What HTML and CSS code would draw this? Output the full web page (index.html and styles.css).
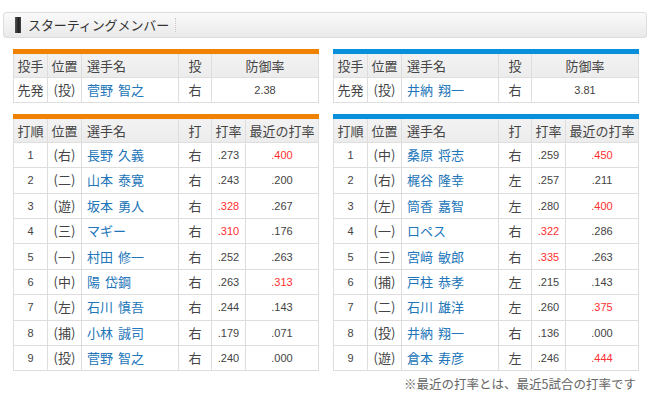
FILE: index.html
```html
<!DOCTYPE html>
<html lang="ja">
<head>
<meta charset="utf-8">
<link rel="stylesheet" href="styles.css">
</head>
<body>
<div class="page">
  <div class="title-bar">
    <span class="title-mark"></span>
    <span class="title-text">スターティングメンバー</span>
    <span class="title-sep"></span>
  </div>

  <div class="columns">
    <div class="team team-home">
      <table class="tbl pitcher">
        <colgroup><col class="c1"><col class="c2"><col class="c3"><col class="c4"><col class="c5w"></colgroup>
        <tr class="head"><th>投手</th><th>位置</th><th class="l">選手名</th><th>投</th><th>防御率</th></tr>
        <tr><td>先発</td><td>(投)</td><td class="l name">菅野 智之</td><td>右</td><td class="num">2.38</td></tr>
      </table>

      <table class="tbl batting">
        <colgroup><col class="c1"><col class="c2"><col class="c3"><col class="c4"><col class="c5"><col class="c6"></colgroup>
        <tr class="head"><th>打順</th><th>位置</th><th class="l">選手名</th><th>打</th><th>打率</th><th>最近の打率</th></tr>
        <tr><td class="num">1</td><td>(右)</td><td class="l name">長野 久義</td><td>右</td><td class="num">.273</td><td class="num red">.400</td></tr>
        <tr><td class="num">2</td><td>(二)</td><td class="l name">山本 泰寛</td><td>右</td><td class="num">.243</td><td class="num">.200</td></tr>
        <tr><td class="num">3</td><td>(遊)</td><td class="l name">坂本 勇人</td><td>右</td><td class="num red">.328</td><td class="num">.267</td></tr>
        <tr><td class="num">4</td><td>(三)</td><td class="l name">マギー</td><td>右</td><td class="num red">.310</td><td class="num">.176</td></tr>
        <tr><td class="num">5</td><td>(一)</td><td class="l name">村田 修一</td><td>右</td><td class="num">.252</td><td class="num">.263</td></tr>
        <tr><td class="num">6</td><td>(中)</td><td class="l name">陽 岱鋼</td><td>右</td><td class="num">.263</td><td class="num red">.313</td></tr>
        <tr><td class="num">7</td><td>(左)</td><td class="l name">石川 慎吾</td><td>右</td><td class="num">.244</td><td class="num">.143</td></tr>
        <tr><td class="num">8</td><td>(捕)</td><td class="l name">小林 誠司</td><td>右</td><td class="num">.179</td><td class="num">.071</td></tr>
        <tr><td class="num">9</td><td>(投)</td><td class="l name">菅野 智之</td><td>右</td><td class="num">.240</td><td class="num">.000</td></tr>
      </table>
    </div>

    <div class="team team-away">
      <table class="tbl pitcher">
        <colgroup><col class="c1"><col class="c2"><col class="c3"><col class="c4"><col class="c5w"></colgroup>
        <tr class="head"><th>投手</th><th>位置</th><th class="l">選手名</th><th>投</th><th>防御率</th></tr>
        <tr><td>先発</td><td>(投)</td><td class="l name">井納 翔一</td><td>右</td><td class="num">3.81</td></tr>
      </table>

      <table class="tbl batting">
        <colgroup><col class="c1"><col class="c2"><col class="c3"><col class="c4"><col class="c5"><col class="c6"></colgroup>
        <tr class="head"><th>打順</th><th>位置</th><th class="l">選手名</th><th>打</th><th>打率</th><th>最近の打率</th></tr>
        <tr><td class="num">1</td><td>(中)</td><td class="l name">桑原 将志</td><td>右</td><td class="num">.259</td><td class="num red">.450</td></tr>
        <tr><td class="num">2</td><td>(右)</td><td class="l name">梶谷 隆幸</td><td>左</td><td class="num">.257</td><td class="num">.211</td></tr>
        <tr><td class="num">3</td><td>(左)</td><td class="l name">筒香 嘉智</td><td>左</td><td class="num">.280</td><td class="num red">.400</td></tr>
        <tr><td class="num">4</td><td>(一)</td><td class="l name">ロペス</td><td>右</td><td class="num red">.322</td><td class="num">.286</td></tr>
        <tr><td class="num">5</td><td>(三)</td><td class="l name">宮﨑 敏郎</td><td>右</td><td class="num red">.335</td><td class="num">.263</td></tr>
        <tr><td class="num">6</td><td>(捕)</td><td class="l name">戸柱 恭孝</td><td>左</td><td class="num">.215</td><td class="num">.143</td></tr>
        <tr><td class="num">7</td><td>(二)</td><td class="l name">石川 雄洋</td><td>左</td><td class="num">.260</td><td class="num red">.375</td></tr>
        <tr><td class="num">8</td><td>(投)</td><td class="l name">井納 翔一</td><td>右</td><td class="num">.136</td><td class="num">.000</td></tr>
        <tr><td class="num">9</td><td>(遊)</td><td class="l name">倉本 寿彦</td><td>左</td><td class="num">.246</td><td class="num red">.444</td></tr>
      </table>
      <p class="note">※最近の打率とは、最近5試合の打率です</p>
    </div>
  </div>
</div>
</body>
</html>
```

FILE: styles.css
```css
html, body {
  margin: 0;
  padding: 0;
  background: #ffffff;
}

body {
  font-family: "Noto Sans CJK JP", "Liberation Sans", sans-serif;
  color: #444444;
}

.page {
  width: 650px;
  padding-top: 12px;
}

.title-bar {
  margin: 0 3px;
  height: 24px;
  border: 1px solid #dddddd;
  border-radius: 3px;
  background: linear-gradient(#f9f9f9, #f3f3f3 45%, #e9e9e9);
  display: flex;
  align-items: center;
  padding-left: 11px;
}

.title-mark {
  width: 6px;
  height: 16px;
  background: linear-gradient(90deg, #555555, #222222 60%, #444444);
  margin-right: 7px;
}

.title-text {
  font-size: 13px;
  line-height: 16px;
  color: #333333;
  letter-spacing: -0.1px;
}

.title-sep {
  width: 0;
  height: 14px;
  margin-left: 6px;
  border-left: 1px dotted #c8c8c8;
}

.columns {
  display: flex;
  gap: 15px;
  padding: 11px 12px 0 13px;
}

.team {
  width: 305px;
  display: flex;
  flex-direction: column;
}

.tbl {
  width: 305px;
  table-layout: fixed;
  border-collapse: collapse;
  font-size: 13px;
}

.team-home .tbl { border-top: 5px solid #ef8200; }
.team-away .tbl { border-top: 5px solid #0a90da; }

.pitcher { margin-bottom: 11px; }

.c1 { width: 34px; }
.c2 { width: 34px; }
.c3 { width: 97px; }
.c4 { width: 33px; }
.c5 { width: 34px; }
.c6 { width: 73px; }
.c5w { width: 107px; }

.tbl th,
.tbl td {
  border: 1px solid #dedede;
  padding: 0;
  text-align: center;
  font-weight: normal;
  line-height: 16px;
  white-space: nowrap;
  overflow: hidden;
}

.tbl tr { height: 25.4px; }
.pitcher tr.head { height: 26px; }

.tbl th {
  background: linear-gradient(#f2f2f2, #ececec);
  color: #444444;
}

.tbl .l {
  text-align: left;
  padding-left: 5px;
}

.name {
  color: #2175b8;
  word-spacing: 2px;
}

.num {
  font-family: "Liberation Sans", Arial, sans-serif;
  font-size: 11px;
  color: #444444;
}

.num.red { color: #ff2f2f; }

.note {
  margin: 4px 2px 0 0;
  text-align: right;
  font-size: 12.5px;
  line-height: 18px;
  color: #666666;
}
```
